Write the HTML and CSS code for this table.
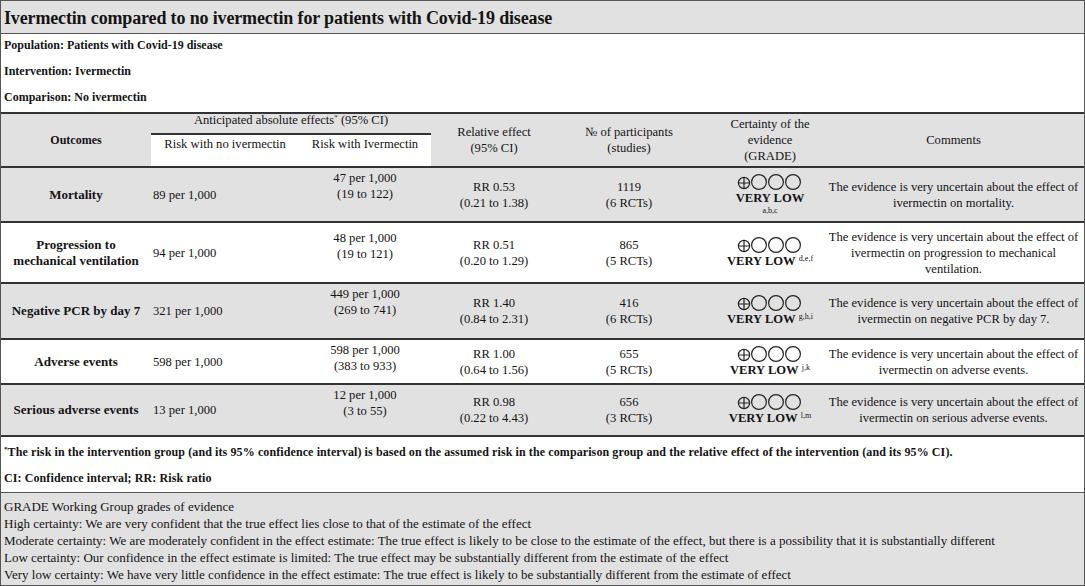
FILE: index.html
```html
<!DOCTYPE html>
<html>
<head>
<meta charset="utf-8">
<title>Ivermectin summary of findings</title>
<link rel="stylesheet" href="styles.css">
</head>
<body>
<div class="sof">
  <div class="title">Ivermectin compared to no ivermectin for patients with Covid-19 disease</div>
  <div class="pico">
    <p>Population: Patients with Covid-19 disease</p>
    <p>Intervention: Ivermectin</p>
    <p>Comparison: No ivermectin</p>
  </div>
  <table class="grid">
    <colgroup>
      <col class="c1"><col class="c2"><col class="c3"><col class="c4"><col class="c5"><col class="c6"><col class="c7">
    </colgroup>
    <thead>
      <tr class="h1">
        <th rowspan="2" class="bold">Outcomes</th>
        <th colspan="2" class="anticip">Anticipated absolute effects<sup>*</sup> (95% CI)</th>
        <th rowspan="2">Relative effect<br>(95% CI)</th>
        <th rowspan="2">№ of participants<br>(studies)</th>
        <th rowspan="2" class="cert">Certainty of the<br>evidence<br>(GRADE)</th>
        <th rowspan="2">Comments</th>
      </tr>
      <tr class="h2">
        <th class="sub">Risk with no ivermectin</th>
        <th class="sub">Risk with Ivermectin</th>
      </tr>
    </thead>
    <tbody>
      <tr class="gray r-mort">
        <td class="outcome">Mortality</td>
        <td class="left">89 per 1,000</td>
        <td class="iver">47 per 1,000<br>(19 to 122)</td>
        <td>RR 0.53<br>(0.21 to 1.38)</td>
        <td>1119<br>(6 RCTs)</td>
        <td class="cert"><div class="grade"><svg width="66" height="16" viewBox="0 0 66 16"><g fill="none" stroke="#222" stroke-width="1.2"><circle cx="7" cy="9" r="5.6"/><path d="M1.4 9H12.6M7 3.4V14.6"/><circle cx="22" cy="8" r="7.4"/><circle cx="39" cy="8" r="7.4"/><circle cx="56" cy="8" r="7.4"/></g></svg></div><div class="vl"><b>VERY LOW</b></div><div class="fnline">a,b,c</div></td>
        <td>The evidence is very uncertain about the effect of ivermectin on mortality.</td>
      </tr>
      <tr class="r-prog">
        <td class="outcome">Progression to<br>mechanical ventilation</td>
        <td class="left">94 per 1,000</td>
        <td class="iver">48 per 1,000<br>(19 to 121)</td>
        <td>RR 0.51<br>(0.20 to 1.29)</td>
        <td>865<br>(5 RCTs)</td>
        <td class="cert"><div class="grade"><svg width="66" height="16" viewBox="0 0 66 16"><g fill="none" stroke="#222" stroke-width="1.2"><circle cx="7" cy="9" r="5.6"/><path d="M1.4 9H12.6M7 3.4V14.6"/><circle cx="22" cy="8" r="7.4"/><circle cx="39" cy="8" r="7.4"/><circle cx="56" cy="8" r="7.4"/></g></svg></div><div class="vl"><b>VERY LOW</b> <sup class="fn">d,e,f</sup></div></td>
        <td>The evidence is very uncertain about the effect of ivermectin on progression to mechanical ventilation.</td>
      </tr>
      <tr class="gray r-neg">
        <td class="outcome">Negative PCR by day 7</td>
        <td class="left">321 per 1,000</td>
        <td class="iver">449 per 1,000<br>(269 to 741)</td>
        <td>RR 1.40<br>(0.84 to 2.31)</td>
        <td>416<br>(6 RCTs)</td>
        <td class="cert"><div class="grade"><svg width="66" height="16" viewBox="0 0 66 16"><g fill="none" stroke="#222" stroke-width="1.2"><circle cx="7" cy="9" r="5.6"/><path d="M1.4 9H12.6M7 3.4V14.6"/><circle cx="22" cy="8" r="7.4"/><circle cx="39" cy="8" r="7.4"/><circle cx="56" cy="8" r="7.4"/></g></svg></div><div class="vl"><b>VERY LOW</b> <sup class="fn">g,h,i</sup></div></td>
        <td>The evidence is very uncertain about the effect of ivermectin on negative PCR by day 7.</td>
      </tr>
      <tr class="r-adv">
        <td class="outcome">Adverse events</td>
        <td class="left">598 per 1,000</td>
        <td class="iver">598 per 1,000<br>(383 to 933)</td>
        <td>RR 1.00<br>(0.64 to 1.56)</td>
        <td>655<br>(5 RCTs)</td>
        <td class="cert"><div class="grade"><svg width="66" height="16" viewBox="0 0 66 16"><g fill="none" stroke="#222" stroke-width="1.2"><circle cx="7" cy="9" r="5.6"/><path d="M1.4 9H12.6M7 3.4V14.6"/><circle cx="22" cy="8" r="7.4"/><circle cx="39" cy="8" r="7.4"/><circle cx="56" cy="8" r="7.4"/></g></svg></div><div class="vl"><b>VERY LOW</b> <sup class="fn">j,k</sup></div></td>
        <td>The evidence is very uncertain about the effect of ivermectin on adverse events.</td>
      </tr>
      <tr class="gray r-ser">
        <td class="outcome">Serious adverse events</td>
        <td class="left">13 per 1,000</td>
        <td class="iver">12 per 1,000<br>(3 to 55)</td>
        <td>RR 0.98<br>(0.22 to 4.43)</td>
        <td>656<br>(3 RCTs)</td>
        <td class="cert"><div class="grade"><svg width="66" height="16" viewBox="0 0 66 16"><g fill="none" stroke="#222" stroke-width="1.2"><circle cx="7" cy="9" r="5.6"/><path d="M1.4 9H12.6M7 3.4V14.6"/><circle cx="22" cy="8" r="7.4"/><circle cx="39" cy="8" r="7.4"/><circle cx="56" cy="8" r="7.4"/></g></svg></div><div class="vl"><b>VERY LOW</b> <sup class="fn">l,m</sup></div></td>
        <td>The evidence is very uncertain about the effect of ivermectin on serious adverse events.</td>
      </tr>
    </tbody>
  </table>
  <div class="notes">
    <p><sup>*</sup>The risk in the intervention group (and its 95% confidence interval) is based on the assumed risk in the comparison group and the relative effect of the intervention (and its 95% CI).</p>
    <p>CI: Confidence interval; RR: Risk ratio</p>
  </div>
  <div class="grades">
    <p>GRADE Working Group grades of evidence</p>
    <p>High certainty: We are very confident that the true effect lies close to that of the estimate of the effect</p>
    <p>Moderate certainty: We are moderately confident in the effect estimate: The true effect is likely to be close to the estimate of the effect, but there is a possibility that it is substantially different</p>
    <p>Low certainty: Our confidence in the effect estimate is limited: The true effect may be substantially different from the estimate of the effect</p>
    <p>Very low certainty: We have very little confidence in the effect estimate: The true effect is likely to be substantially different from the estimate of effect</p>
  </div>
</div>
</body>
</html>
```
FILE: styles.css
```css
html, body {
  margin: 0;
  padding: 0;
  background: #fff;
}
body {
  font-family: "Liberation Serif", "Times New Roman", serif;
  font-size: 12.6px;
  color: #141414;
  width: 1085px;
}
p { margin: 0; }
.sof {
  width: 1085px;
  height: 586px;
  box-sizing: border-box;
  border: 1px solid #555;
  overflow: hidden;
}
.title {
  background: #e1e1e1;
  height: 33px;
  box-sizing: border-box;
  border-bottom: 1px solid #555;
  padding: 6px 0 0 3px;
  font-size: 18px;
  letter-spacing: -0.15px;
  font-weight: bold;
  line-height: 22px;
  white-space: nowrap;
}
.pico {
  height: 80px;
  box-sizing: border-box;
  padding: 0 0 0 3px;
  font-size: 12px;
  font-weight: bold;
  border-bottom: 2px solid #333;
}
.pico p { line-height: 22px; margin-bottom: 4px; }
.grid {
  width: 1083px;
  border-collapse: collapse;
  table-layout: fixed;
}
.c1 { width: 150px; }
.c2 { width: 148px; }
.c3 { width: 132px; }
.c4 { width: 126px; }
.c5 { width: 144px; }
.c6 { width: 122px; }
.c7 { width: 261px; }
th, td {
  padding: 0 2px;
  text-align: center;
  vertical-align: middle;
  line-height: 16px;
  font-weight: normal;
}
sup { font-size: 7px; line-height: 0; }
thead { background: #e1e1e1; border-bottom: 2px solid #333; }
thead tr.h1 { height: 20px; }
thead tr.h2 { height: 33px; }
th.anticip {
  border-bottom: 2px solid #333;
  vertical-align: top;
  line-height: 13px;
  padding-top: 0;
}
th.sub {
  background: #fff;
  vertical-align: top;
  padding-top: 1px;
}
.bold { font-weight: bold; font-size: 12px; }
td.outcome { font-weight: bold; font-size: 13px; }
td.left { text-align: left; }
td.iver { vertical-align: top; padding-top: 2px; }
tr.r-prog td.iver { padding-top: 7px; }
tbody tr { border-bottom: 2px solid #333; }
tbody tr.gray { background: #e1e1e1; }
tr.r-mort { height: 55px; }
tr.r-prog { height: 61px; }
tr.r-neg { height: 56px; }
tr.r-adv { height: 45px; }
tr.r-ser { height: 52px; }
.cert { padding-left: 18px; }
.grade { height: 16px; display: flex; justify-content: center; }
.grade svg { display: block; }
.vl { line-height: 16px; white-space: nowrap; }
.vl b { font-weight: bold; }
.fnline { font-size: 8px; line-height: 10px; }
sup.fn { font-size: 8px; vertical-align: 4px; line-height: 0; }
.notes {
  height: 56px;
  box-sizing: border-box;
  padding: 6px 0 0 3px;
  border-bottom: 1px solid #555;
  font-weight: bold;
  font-size: 12px;
  letter-spacing: 0.1px;
}
.notes p { line-height: 18px; }
.notes p + p { margin-top: 8px; }
.grades {
  background: #e1e1e1;
  height: 100%;
  padding: 5px 0 0 3px;
  font-size: 13px;
}
.grades p { line-height: 17px; }
```
